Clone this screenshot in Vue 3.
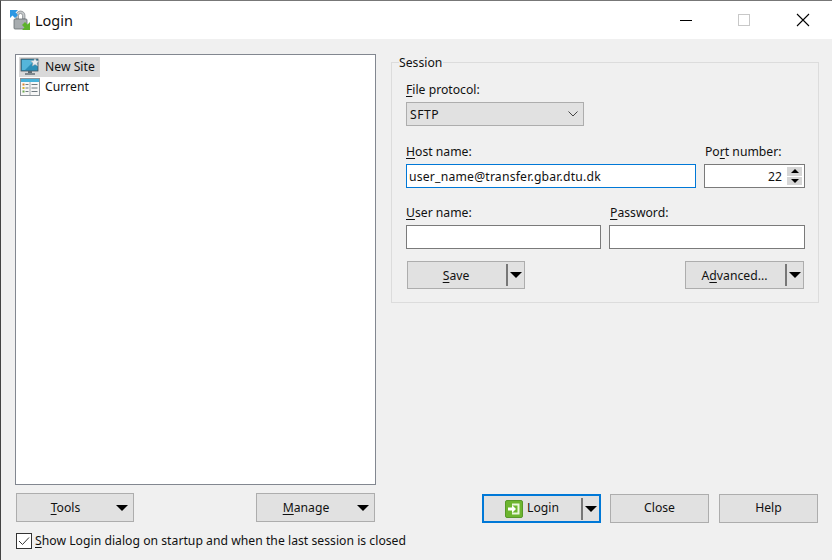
<template>
  <div class="window">
    <header class="titlebar">
      <svg class="app-icon" width="22" height="22" viewBox="0 0 22 22">
        <path d="M7 10V6.500a4.500 4.500 0 0 1 9 0V10h-2.500V6.500a2 2 0 0 0-4 0V10z" fill="#c4c8ca" stroke="#70767a" stroke-width=".6" />
        <rect x="5" y="10" width="13" height="10" rx="1" fill="#a7acaf" stroke="#666c70" stroke-width=".8" />
        <path d="M1 1h8L6.500 3.500 9 6 6 9 3.500 6.500 1 9z" fill="#2b97e3" />
        <path d="M21 21h-8l2.500-2.500L13 16l3-3 2.500 2.500L21 13z" fill="#5db32a" />
      </svg>
      <span class="title">Login</span>
      <div class="caption-buttons">
        <svg width="14" height="14" viewBox="0 0 14 14"><path d="M1 7.500h12" stroke="#000" /></svg>
        <svg width="14" height="14" viewBox="0 0 14 14"><rect x="1.500" y="1.500" width="11" height="11" fill="none" stroke="#c8c8c8" /></svg>
        <svg class="caption-close" width="14" height="14" viewBox="0 0 14 14"><path d="M1 1l12 12M13 1L1 13" stroke="#000" stroke-width="1.100" /></svg>
      </div>
    </header>

    <main class="main">
      <section class="left">
        <div class="tree">
          <div class="tree-row selected">
            <svg width="20" height="18" viewBox="0 0 20 18">
              <rect x="1" y="1" width="17" height="12" fill="#2b8fb8" stroke="#45525a" stroke-width=".8" />
              <path d="M2 2h13L5 12H2z" fill="#55b6da" />
              <rect x="8" y="13" width="4" height="2" fill="#5e6a70" />
              <rect x="5" y="15" width="10" height="2" fill="#80898e" />
              <path d="M15 0l1.300 2.700 3 .3-2.200 2 .6 3-2.700-1.500L12.300 8l.6-3-2.200-2 3-.3z" fill="#e9edf0" stroke="#9aa3a8" stroke-width=".5" />
            </svg>
            <span>New Site</span>
          </div>
          <div class="tree-row">
            <svg width="20" height="18" viewBox="0 0 20 18">
              <rect x=".5" y=".5" width="19" height="17" fill="#f7f7f7" stroke="#8d9499" />
              <rect x="1" y="1" width="18" height="3" fill="#46b2da" />
              <path d="M10 4v13" stroke="#a5abaf" />
              <path d="M2.500 6.500h2" stroke="#d9822b" stroke-width="2" />
              <path d="M2.500 10h2" stroke="#d6b52a" stroke-width="2" />
              <path d="M2.500 13.500h2" stroke="#6aa84f" stroke-width="2" />
              <path d="M5.500 6.500h3M5.500 10h3M5.500 13.500h3M11.500 6.500h6M11.500 10h6M11.500 13.500h6" stroke="#6f7a80" />
            </svg>
            <span>Current</span>
          </div>
        </div>

        <div class="left-buttons">
          <button class="btn tools">
            <span class="btn-text"><u>T</u>ools</span>
            <i class="arrow"></i>
          </button>
          <button class="btn manage">
            <span class="btn-text"><u>M</u>anage</span>
            <i class="arrow"></i>
          </button>
        </div>

        <label class="startup">
          <span class="check">
            <svg width="16" height="16" viewBox="0 0 16 16"><path d="M3 8l3.500 3.500L13 4.500" fill="none" stroke="#333" stroke-width="1" /></svg>
          </span>
          <span class="startup-text"><u>S</u>how Login dialog on startup and when the last session is closed</span>
        </label>
      </section>

      <section class="right">
        <fieldset class="session">
          <legend>Session</legend>

          <div class="field">
            <label><u>F</u>ile protocol:</label>
            <div class="combo">
              <span>SFTP</span>
              <svg width="10" height="6" viewBox="0 0 10 6"><path d="M.5.500L5 5 9.500.500" fill="none" stroke="#444" /></svg>
            </div>
          </div>

          <div class="host-row">
            <div class="field host">
              <label><u>H</u>ost name:</label>
              <input class="text focused" value="user_name@transfer.gbar.dtu.dk" readonly />
            </div>
            <div class="field port">
              <label>Po<u>r</u>t number:</label>
              <div class="spin">
                <span class="spin-value">22</span>
                <div class="spin-buttons">
                  <div class="spin-up"><i></i></div>
                  <div class="spin-down"><i></i></div>
                </div>
              </div>
            </div>
          </div>

          <div class="user-row">
            <div class="field">
              <label><u>U</u>ser name:</label>
              <input class="text" readonly />
            </div>
            <div class="field password">
              <label><u>P</u>assword:</label>
              <input class="text" readonly />
            </div>
          </div>

          <div class="session-buttons">
            <button class="btn split">
              <span class="btn-text"><u>S</u>ave</span>
              <b class="divider"></b>
              <i class="arrow"></i>
            </button>
            <button class="btn split">
              <span class="btn-text">A<u>d</u>vanced...</span>
              <b class="divider"></b>
              <i class="arrow"></i>
            </button>
          </div>
        </fieldset>

        <div class="dialog-buttons">
          <button class="btn split login">
            <span class="btn-text login-text">
              <svg width="18" height="18" viewBox="0 0 18 18">
                <rect x=".5" y=".5" width="17" height="17" rx="1.500" fill="#6db52f" stroke="#57982a" />
                <path d="M7 3.500h7.500v11H7v-2h5.500v-7H7z" fill="#e9f6dc" />
                <path d="M3 7.500h4V5l4 4-4 4v-2.500H3z" fill="#fff" />
              </svg>
              <span>Login</span>
            </span>
            <b class="divider"></b>
            <i class="arrow"></i>
          </button>
          <button class="btn plain close"><span class="btn-text">Close</span></button>
          <button class="btn plain help"><span class="btn-text">Help</span></button>
        </div>
      </section>
    </main>
  </div>
</template>

<script setup>
</script>

<style>
html, body { margin: 0; overflow: hidden; }
</style>

<style scoped>
.window {
  width: 832px;
  height: 560px;
  box-sizing: border-box;
  display: flex;
  flex-direction: column;
  background: #f0f0f0;
  border-top: 1px solid #777;
  border-left: 1px solid #444;
  font-family: "Noto Sans", "Open Sans", sans-serif;
  font-size: 12.2px;
  color: #111;
}
u { text-underline-offset: 2px; }

.titlebar {
  height: 38px;
  flex: none;
  background: #fff;
  display: flex;
  align-items: center;
  padding-left: 8px;
}
.app-icon { width: 22px; height: 22px; }
.title { font-size: 14.500px; margin-left: 4px; }
.caption-buttons {
  margin-left: auto;
  display: flex;
  gap: 44px;
  padding-right: 22px;
}
.caption-buttons svg { display: block; }
.caption-close { margin-left: 1px; }

.main {
  flex: 1;
  display: flex;
  padding: 15px 13px 0 14px;
  gap: 15px;
}
.left { width: 361px; display: flex; flex-direction: column; padding-bottom: 11px; }
.right { width: 428px; display: flex; flex-direction: column; }

.tree {
  flex: 1;
  background: #fff;
  border: 1px solid #828790;
  padding: 2px 3px;
}
.tree-row {
  display: flex;
  align-items: center;
  gap: 5px;
  height: 20px;
  padding-left: 1px;
  width: fit-content;
  padding-right: 5px;
}
.tree-row span { padding-bottom: 2px; }
.tree-row.selected { background: #d9d9d9; }

.left-buttons { display: flex; justify-content: space-between; margin: 8px 1px 0 1px; }
.btn {
  box-sizing: border-box;
  height: 29px;
  padding: 0;
  background: #e1e1e1;
  border: 1px solid #adadad;
  font: inherit;
  color: #111;
  display: flex;
  align-items: center;
  position: relative;
}
.btn-text { flex: 1; text-align: center; padding-bottom: 1px; }
.tools { width: 118px; }
.manage { width: 119px; }
.arrow {
  display: block;
  width: 0;
  height: 0;
  border-left: 6px solid transparent;
  border-right: 6px solid transparent;
  border-top: 6px solid #000;
  flex: none;
}
.tools .arrow, .manage .arrow { margin: 0 5px 0 0; }
.tools .btn-text, .manage .btn-text { padding-right: 2px; }

.startup { display: flex; align-items: center; gap: 3px; margin: 10px 0 0 1px; white-space: nowrap; }
.startup-text { letter-spacing: .015px; }
.check {
  box-sizing: border-box;
  width: 16px;
  height: 16px;
  background: #fff;
  border: 1px solid #333;
  display: flex;
}
.check svg { margin: -1px; }

.session {
  box-sizing: border-box;
  height: 249px;
  margin: 0;
  padding: 0 14px 0 14px;
  border: 1px solid #dcdcdc;
  min-width: 0;
}
legend { padding: 1px 1px 0 0; margin-left: -7px; line-height: 16px; }

.field { display: flex; flex-direction: column; }
.field label { line-height: 16px; padding-top: 1px; margin-bottom: 4px; }

.combo {
  box-sizing: border-box;
  width: 178px;
  height: 24px;
  background: #e1e1e1;
  border: 1px solid #adadad;
  display: flex;
  align-items: center;
  justify-content: space-between;
  padding: 0 5px 0 3px;
}
.combo span { letter-spacing: .5px; }
.session > .field { margin-top: 10px; }

.text {
  box-sizing: border-box;
  width: 100%;
  height: 24px;
  padding: 0 2px;
  background: #fff;
  border: 1px solid #7a7a7a;
  font: inherit;
  letter-spacing: .2px;
  color: #111;
  outline: none;
  display: block;
}
.text.focused { border-color: #0078d7; }

.host-row { display: grid; grid-template-columns: 290px 101px; gap: 8px; margin-top: 17px; }
.port label { margin-left: 1px; }
.spin {
  box-sizing: border-box;
  height: 24px;
  background: #fff;
  border: 1px solid #7a7a7a;
  display: flex;
  align-items: center;
  justify-content: flex-end;
}
.spin-value { margin-right: 5px; }
.spin-buttons { width: 15px; height: 18px; margin-right: 2px; display: flex; flex-direction: column; gap: 1px; }
.spin-up, .spin-down { flex: 1; background: #d6d6d6; display: flex; align-items: center; justify-content: center; }
.spin-up i, .spin-down i { width: 0; height: 0; border-left: 4px solid transparent; border-right: 4px solid transparent; }
.spin-up i { border-bottom: 4px solid #000; }
.spin-down i { border-top: 4px solid #000; }

.user-row { display: grid; grid-template-columns: 195px 196px; gap: 8px; margin-top: 16px; }
.password label { margin-left: 1px; }

.session-buttons { display: flex; justify-content: space-between; margin: 12px 0 0 1px; }
.session-buttons .btn { width: 118px; height: 28px; }
.session-buttons .btn + .btn { width: 119px; }
.session-buttons .btn-text { padding-right: 2px; padding-bottom: 0; }

.divider { display: block; width: 2px; height: 22px; background: #777; margin-right: 2px; flex: none; }
.split .arrow { margin-right: 2px; }

.dialog-buttons { display: flex; margin-top: auto; margin-bottom: 37px; margin-left: 91px; }
.login { width: 119px; border: 2px solid #0078d7; margin-right: 9px; }
.login-text { display: flex; justify-content: center; align-items: center; gap: 4px; padding: 0 1px 0 0; }
.login-text span { padding-bottom: 2px; }
.plain { width: 99px; }
.plain .btn-text { padding-bottom: 2px; }
.close { margin-right: 10px; }
</style>
